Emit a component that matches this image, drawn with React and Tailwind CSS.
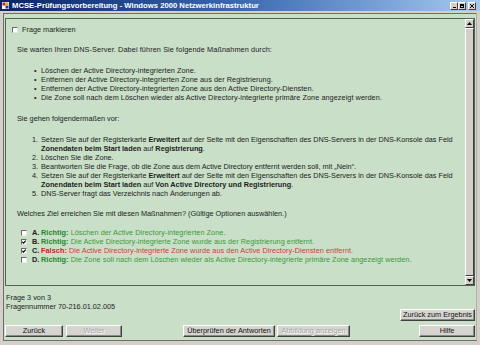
import React from "react";

function Box({ checked }) {
  return (
    <span className="inline-flex w-[6px] h-[6px] bg-white border border-t-[#6a6a6a] border-l-[#6a6a6a] border-b-[#e8e8e8] border-r-[#e8e8e8] items-center justify-center shrink-0">
      {checked && (
        <svg width="4" height="4" viewBox="0 0 4 4">
          <path d="M0.3 1.8 L1.5 3.2 L3.8 0.6" stroke="#000" strokeWidth="1.1" fill="none" />
        </svg>
      )}
    </span>
  );
}

function Btn({ children, disabled, className }) {
  return (
    <div
      className={
        "h-[12px] flex items-center justify-center bg-[#d6d4ce] border border-t-white border-l-white border-b-[#404040] border-r-[#404040] shadow-[inset_-1px_-1px_0_#8a8a8a] text-[7.3px] leading-none whitespace-nowrap " +
        (disabled ? "text-[#a8a8a8] [text-shadow:1px_1px_0_#ffffff] " : "text-[#111] ") +
        className
      }
    >
      {children}
    </div>
  );
}

function TitleBtn({ children }) {
  return (
    <div className="w-[8px] h-[8px] bg-[#d4d0c8] border border-t-white border-l-white border-b-[#404040] border-r-[#404040] flex items-center justify-center">
      {children}
    </div>
  );
}

export default function App() {
  const bullets = [
    "Löschen der Active Directory-integrierten Zone.",
    "Entfernen der Active Directory-integrierten Zone aus der Registrierung.",
    "Entfernen der Active Directory-integrierten Zone aus den Active Directory-Diensten.",
    "Die Zone soll nach dem Löschen wieder als Active Directory-integrierte primäre Zone angezeigt werden.",
  ];
  return (
    <div className="w-[480px] h-[345px] bg-[#d4d0c8] flex flex-col overflow-hidden font-['Liberation_Sans',Arial,sans-serif] text-[#1c1c1c]">
      {/* Title bar */}
      <div className="h-[11px] shrink-0 flex items-center bg-gradient-to-r from-[#0a246a] via-[#3a6ab0] to-[#a6caf0]">
        <div className="ml-[2px] w-[7px] h-[7px] shrink-0">
          <svg width="7" height="7" viewBox="0 0 7 7">
            <rect x="0" y="0" width="7" height="7" fill="#ffffff" />
            <rect x="0.5" y="0.5" width="3" height="3" fill="#d02020" />
            <rect x="3.5" y="3.5" width="3" height="3" fill="#2040c0" />
            <rect x="3.5" y="0.5" width="3" height="3" fill="#e0b020" />
          </svg>
        </div>
        <span className="ml-[3px] text-white font-bold text-[7.7px] leading-none whitespace-nowrap">
          MCSE-Prüfungsvorbereitung - Windows 2000 Netzwerkinfrastruktur
        </span>
        <div className="ml-auto mr-[4px] flex items-center">
          <TitleBtn>
            <div className="w-[3px] h-[1px] bg-black mt-[3px]" />
          </TitleBtn>
          <TitleBtn>
            <div className="w-[4px] h-[4px] border border-black border-t-2" />
          </TitleBtn>
          <div className="w-[2px]" />
          <TitleBtn>
            <svg width="4" height="4" viewBox="0 0 4 4">
              <path d="M0 0 L4 4 M4 0 L0 4" stroke="#000" strokeWidth="1" />
            </svg>
          </TitleBtn>
        </div>
      </div>
      <div className="h-[2px] shrink-0" />
      {/* Client area */}
      <div className="h-[328px] shrink-0 mx-[3px] bg-[#c9dfc8] border border-[#6e6e6e] border-r-[#b0b0b0] flex flex-col text-[7.3px] leading-[9px]">
        {/* Question panel */}
        <div className="mt-[4px] ml-[1px] mr-[1px] h-[268px] border border-[#55624f] flex shrink-0">
          <div className="flex-1 min-w-0 overflow-hidden pl-[11px] pt-[6px] whitespace-nowrap">
            <div className="flex items-center -ml-[5px] gap-[4px] h-[9px]">
              <Box />
              <span>Frage markieren</span>
            </div>
            <div className="mt-[11px] tracking-[0.1px]">Sie warten Ihren DNS-Server. Dabei führen Sie folgende Maßnahmen durch:</div>
            <div className="mt-[12px] tracking-[0.05px]">
              {bullets.map((b) => (
                <div key={b} className="flex">
                  <span className="w-[24px] pl-[17px] shrink-0">•</span>
                  <span>{b}</span>
                </div>
              ))}
            </div>
            <div className="mt-[12px]">Sie gehen folgendermaßen vor:</div>
            <div className="mt-[12px]">
              <div className="flex">
                <span className="w-[24px] pr-[3px] text-right shrink-0">1.</span>
                <span>
                  Setzen Sie auf der Registerkarte <b>Erweitert</b> auf der Seite mit den Eigenschaften des DNS-Servers in der DNS-Konsole das Feld
                  <br />
                  <b>Zonendaten beim Start laden</b> auf <b>Registrierung</b>.
                </span>
              </div>
              <div className="flex">
                <span className="w-[24px] pr-[3px] text-right shrink-0">2.</span>
                <span>Löschen Sie die Zone.</span>
              </div>
              <div className="flex">
                <span className="w-[24px] pr-[3px] text-right shrink-0">3.</span>
                <span>Beantworten Sie die Frage, ob die Zone aus dem Active Directory entfernt werden soll, mit „Nein“.</span>
              </div>
              <div className="flex">
                <span className="w-[24px] pr-[3px] text-right shrink-0">4.</span>
                <span>
                  Setzen Sie auf der Registerkarte <b>Erweitert</b> auf der Seite mit den Eigenschaften des DNS-Servers in der DNS-Konsole das Feld
                  <br />
                  <b>Zonendaten beim Start laden</b> auf <b>Von Active Directory und Registrierung</b>.
                </span>
              </div>
              <div className="flex">
                <span className="w-[24px] pr-[3px] text-right shrink-0">5.</span>
                <span>DNS-Server fragt das Verzeichnis nach Änderungen ab.</span>
              </div>
            </div>
            <div className="mt-[11px]">Welches Ziel erreichen Sie mit diesen Maßnahmen? (Gültige Optionen auswählen.)</div>
            <div className="mt-[10px] tracking-[0.05px]">
              {[
                { l: "A.", ok: true, c: false, t: "Löschen der Active Directory-integrierten Zone." },
                { l: "B.", ok: true, c: true, t: "Die Active Directory-integrierte Zone wurde aus der Registrierung entfernt." },
                { l: "C.", ok: false, c: true, t: "Die Active Directory-integrierte Zone wurde aus den Active Directory-Diensten entfernt." },
                { l: "D.", ok: true, c: false, t: "Die Zone soll nach dem Löschen wieder als Active Directory-integrierte primäre Zone angezeigt werden." },
              ].map((o) => (
                <div key={o.l} className="flex items-center h-[9px]">
                  <span className="w-[15px] pl-[4px] shrink-0 flex items-center">
                    <Box checked={o.c} />
                  </span>
                  <span className="w-[9px] font-bold shrink-0 text-[#222]">{o.l}</span>
                  {o.ok ? (
                    <span className="text-[#3a9a3a]">
                      <b className="text-[#22882a]">Richtig:</b> {o.t}
                    </span>
                  ) : (
                    <span className="text-[#d23c3c]">
                      <b className="text-[#c82424]">Falsch:</b> {o.t}
                    </span>
                  )}
                </div>
              ))}
            </div>
          </div>
          {/* Scrollbar */}
          <div className="w-[9px] shrink-0 flex flex-col bg-[#e6e4de]">
            <div className="h-[9px] bg-[#d4d0c8] border border-t-white border-l-white border-b-[#404040] border-r-[#404040] flex items-center justify-center">
              <svg width="5" height="3" viewBox="0 0 5 3">
                <path d="M0 3 L2.5 0 L5 3 Z" fill="#000" />
              </svg>
            </div>
            <div className="flex-1 bg-[#d4d0c8] border border-t-white border-l-white border-b-[#404040] border-r-[#404040]" />
            <div className="h-[9px] bg-[#d4d0c8] border border-t-white border-l-white border-b-[#404040] border-r-[#404040] flex items-center justify-center">
              <svg width="5" height="3" viewBox="0 0 5 3">
                <path d="M0 0 L2.5 3 L5 0 Z" fill="#000" />
              </svg>
            </div>
          </div>
        </div>
        {/* Footer */}
        <div className="mt-[7px] pl-[2px] text-[#222]">
          <div>Frage 3 von 3</div>
          <div>Fragennummer 70-216.01.02.005</div>
        </div>
        <div className="flex justify-end -mt-[2px] pr-[1px]">
          <Btn className="w-[75px]">Zurück zum Ergebnis</Btn>
        </div>
        <div className="flex mt-[4px] pr-[1px]">
          <Btn className="ml-[1px] w-[58px]">Zurück</Btn>
          <Btn disabled className="ml-[3px] w-[56px]">Weiter</Btn>
          <Btn className="ml-[61px] w-[92px]">Überprüfen der Antworten</Btn>
          <Btn disabled className="ml-[2px] w-[73px]">Abbildung anzeigen</Btn>
          <Btn className="ml-auto w-[56px]">Hilfe</Btn>
        </div>
      </div>
    </div>
  );
}
